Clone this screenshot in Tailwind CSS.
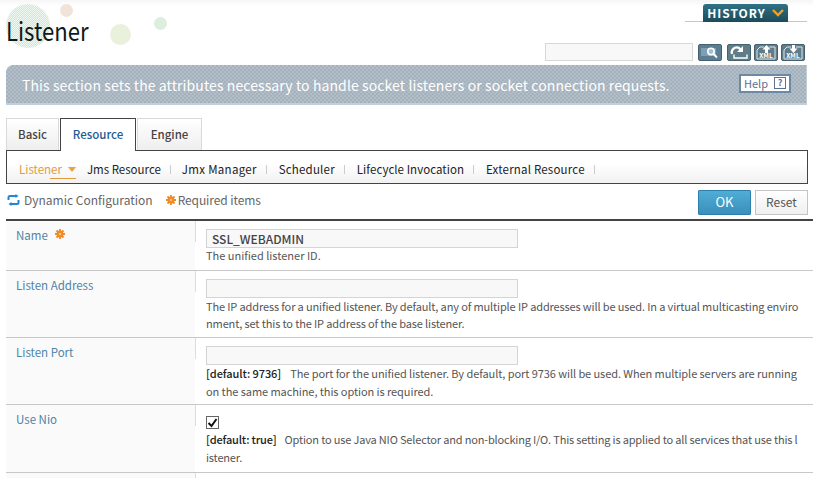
<!DOCTYPE html>
<html lang="en">
<head>
  <meta charset="UTF-8">
  <title>Listener</title>
  <script src="https://cdn.jsdelivr.net/npm/@tailwindcss/browser@4"></script>
</head>
<body class="bg-white font-['Noto_Sans_CJK_KR','Noto_Sans',sans-serif] text-[12px] text-[#555] h-[478px] w-[813px] overflow-hidden">
  <!-- header -->
  <div class="relative h-[65px] bg-gradient-to-b from-[#f6f6f6] to-white to-[6px]">
    <div class="absolute left-[6px] top-[4px] w-[44px] h-[44px] rounded-full bg-[repeating-conic-gradient(#cde8d6_0_25%,#eef8f1_0_50%)] bg-[length:2px_2px]"></div>
    <div class="absolute left-[60px] top-[4px] w-[13px] h-[13px] rounded-full bg-[#f0e3da]"></div>
    <div class="absolute left-[110px] top-[24px] w-[21px] h-[21px] rounded-full bg-[#e9f1dc]"></div>
    <div class="absolute left-[154px] top-[17px] w-[13px] h-[13px] rounded-full bg-[#dceedd]"></div>
    <h1 class="absolute left-[6px] top-[11px] text-[26px] leading-[38px] text-[#0c1a1c] origin-left scale-x-[.85]">Listener</h1>

    <div class="absolute left-[685px] top-[4px] w-[122px] pl-[18px] border-b border-[#b5cdd3] h-[18px]">
      <div class="w-[85px] h-[18px] bg-gradient-to-b from-[#2f7286] to-[#1d4a5a] rounded-t-[3px] flex items-center justify-center gap-[6px] text-white font-bold text-[12px] leading-none tracking-[1px]">
        <span>HISTORY</span>
        <svg width="12" height="8" viewBox="0 0 12 8"><path d="M1 1l5 5 5-5" fill="none" stroke="#f5a01f" stroke-width="2.400"/></svg>
      </div>
    </div>

    <div class="absolute left-[545px] top-[43px] flex items-center">
      <input type="text" class="w-[148px] h-[18px] bg-[#f8f8f8] border border-[#d8d8d8]">
      <div class="ml-[5px] w-[24px] h-[17px] bg-[#5b7d93] border border-[#44616f] rounded-[2px] flex items-center justify-center">
        <svg width="20" height="13" viewBox="0 0 20 13"><rect x="1" y="2" width="15" height="8" fill="#7fa0b4"/><circle cx="11" cy="5.500" r="3.200" fill="#9fc0d4" stroke="#fff" stroke-width="1.600"/><path d="M13.500 8l3.500 3.500" stroke="#fff" stroke-width="2"/></svg>
      </div>
      <div class="ml-[5px] w-[24px] h-[17px] bg-[#5f7c88] border border-[#44616f] rounded-[2px] flex items-center justify-center">
        <svg width="20" height="15" viewBox="0 0 20 15"><path d="M3 9a5 5 0 0 1 7-6l2 2" fill="none" stroke="#fff" stroke-width="2.200"/><path d="M14 1v6H8z" fill="#fff"/><path d="M5 9.500v3.500h13V9.500" fill="none" stroke="#fff" stroke-width="1.400"/></svg>
      </div>
      <div class="ml-[3px] w-[24px] h-[17px] bg-[#5f7c88] border border-[#44616f] rounded-[2px] flex items-center justify-center">
        <svg width="22" height="15" viewBox="0 0 22 15"><path d="M2 14V5l3-3h4M14 2h6v12H2" fill="none" stroke="#dfe7ea" stroke-width="1"/><path d="M11.500 0l4 4.500H13V8h-3V4.500H7.500z" fill="#fff"/><text x="11" y="13" text-anchor="middle" font-size="6.500" font-weight="700" fill="#fff">XML</text></svg>
      </div>
      <div class="ml-[3px] w-[24px] h-[17px] bg-[#5f7c88] border border-[#44616f] rounded-[2px] flex items-center justify-center">
        <svg width="22" height="15" viewBox="0 0 22 15"><path d="M2 14V5l3-3h4M14 2h6v12H2" fill="none" stroke="#dfe7ea" stroke-width="1"/><path d="M11.500 8l4-4.500H13V0h-3v3.500H7.500z" fill="#fff"/><text x="11" y="13" text-anchor="middle" font-size="6.500" font-weight="700" fill="#fff">XML</text></svg>
      </div>
    </div>
  </div>

  <!-- section banner -->
  <div class="mx-[6px] w-[801px] h-[40px] rounded-tl-[8px] border-b-2 border-r border-[#c4ced6] bg-[#aab7c2] bg-[repeating-conic-gradient(#a5b2bd_0_25%,#b1bdc7_0_50%)] bg-[length:4px_4px] flex items-center justify-between pl-[16px] pr-[15px]">
    <span class="text-white text-[14px] tracking-[0.1px] pt-[3px]">This section sets the attributes necessary to handle socket listeners or socket connection requests.</span>
    <span class="w-[52px] h-[19px] mb-[2px] bg-white border-2 border-[#6c8aa6] flex items-center justify-center gap-[6px] text-[11px] text-[#5c7390]">Help <span class="w-[12px] h-[12px] border border-[#5c7390] flex items-center justify-center text-[9px] font-bold">?</span></span>
  </div>

  <!-- tabs -->
  <div class="flex items-end mt-[13px] pl-[6px] h-[32px] gap-[1px] font-medium text-[11.500px]">
    <div class="w-[53px] h-[32px] border border-b-0 border-[#d9d9d9] bg-gradient-to-b from-white to-[#eeeeee] flex items-center justify-center text-[#444]">Basic</div>
    <div class="w-[76px] h-[33px] mb-[-1px] z-10 border border-b-0 border-[#444] bg-white flex items-center justify-center text-[#1f5a94]">Resource</div>
    <div class="w-[65px] h-[32px] border border-b-0 border-[#d9d9d9] bg-gradient-to-b from-white to-[#eeeeee] flex items-center justify-center text-[#444]">Engine</div>
  </div>
  <div class="mx-[6px] w-[802px] h-[34px] border border-[#444] bg-gradient-to-b from-white from-40% to-[#f1f1f1] flex items-center pl-[12px] pt-[5px] text-[#222] text-[11.500px]">
    <span class="relative flex items-center gap-[6px] text-[#e39a3c]">Listener
      <svg width="8" height="5" viewBox="0 0 8 5"><path d="M0 0h8L4 5z" fill="#e8a33c"/></svg>
      <span class="absolute left-[31px] right-0 top-[17px] h-px bg-[#e39a3c]"></span>
    </span>
    <span class="ml-[11px]">Jms Resource</span><span class="w-px h-[9px] bg-[#ccc] mx-[9px]"></span>
    <span class="ml-[2px] tracking-[0.3px]">Jmx Manager</span><span class="w-px h-[9px] bg-[#ccc] mx-[9px]"></span>
    <span class="ml-[3px] tracking-[0.2px]">Scheduler</span><span class="w-px h-[9px] bg-[#ccc] mx-[9px]"></span>
    <span class="ml-[3px] tracking-[0.05px]">Lifecycle Invocation</span><span class="w-px h-[9px] bg-[#ccc] mx-[9px]"></span>
    <span class="ml-[3px] tracking-[0.2px]">External Resource</span><span class="w-px h-[9px] bg-[#ccc] mx-[9px]"></span>
  </div>

  <!-- toolbar -->
  <div class="mx-[6px] w-[802px] h-[35px] flex items-center justify-between text-[#666]">
    <div class="flex items-center mb-[3px]">
      <svg width="13" height="12" viewBox="0 0 13 12" class="ml-[1px]"><path d="M1.500 6V3.500a1.500 1.500 0 0 1 1.500-1.500h6M11.500 6v2.500a1.500 1.500 0 0 1-1.500 1.500H4" fill="none" stroke="#1f86dc" stroke-width="2"/><path d="M8.500 0l3 2-3 2zM4.500 8l-3 2 3 2z" fill="#1f86dc"/></svg>
      <span class="ml-[4px]">Dynamic Configuration</span>
      <svg width="10" height="10" viewBox="0 0 10 10" class="ml-[13px]"><path d="M5 0v10M0 5h10M1.500 1.500l7 7M8.500 1.500l-7 7" stroke="#ef8a24" stroke-width="1.800"/><circle cx="5" cy="5" r="3.400" fill="#ef8a24"/><circle cx="5" cy="5" r="1" fill="#fbd9b0"/></svg>
      <span class="ml-[2px] tracking-[-0.1px]">Required items</span>
    </div>
    <div class="flex items-center gap-[4px] mt-[1px]">
      <button class="w-[53px] h-[25px] bg-gradient-to-b from-[#4fadd6] to-[#3b8fbb] border border-[#2d80ac] rounded-[1px] text-white text-[13px]">OK</button>
      <button class="w-[53px] h-[25px] bg-gradient-to-b from-white to-[#efefef] border border-[#c4c4c4] text-[#555]">Reset</button>
    </div>
  </div>

  <!-- form rows -->
  <div class="mx-[6px] w-[807px] border-t-2 border-[#444]">
    <div class="grid grid-cols-[189px_1fr] h-[50px] border-b border-[#c8c8c8]">
      <div class="bg-[#fafafa] pl-[10px] pt-[6px] text-[#4f84a6] text-[11.500px] flex items-start gap-[7px]">Name
        <svg width="10" height="10" viewBox="0 0 10 10" class="mt-[2px]"><path d="M5 0v10M0 5h10M1.500 1.500l7 7M8.500 1.500l-7 7" stroke="#ef8a24" stroke-width="1.800"/><circle cx="5" cy="5" r="3.400" fill="#ef8a24"/><circle cx="5" cy="5" r="1" fill="#fbd9b0"/></svg>
      </div>
      <div class="relative pl-[11px] pt-[8px]">
        <span class="absolute left-0 top-0 w-px h-[21px] bg-[#ddd]"></span>
        <input type="text" value="SSL_WEBADMIN" class="block w-[312px] h-[19px] px-[5px] bg-[#f8f8f8] border border-[#d4d4d4] text-[#444] font-medium">
        <p class="leading-[17px] mt-[-1px] text-[11px]">The unified listener ID.</p>
      </div>
    </div>
    <div class="grid grid-cols-[189px_1fr] h-[67px] border-b border-[#c8c8c8]">
      <div class="bg-[#fafafa] pl-[10px] pt-[6px] text-[#4f84a6] text-[11.500px]">Listen Address</div>
      <div class="relative pl-[11px] pt-[8px]">
        <span class="absolute left-0 top-0 w-px h-[21px] bg-[#ddd]"></span>
        <input type="text" class="block w-[312px] h-[19px] bg-[#f8f8f8] border border-[#d4d4d4]">
        <p class="leading-[17px] whitespace-nowrap text-[11px] tracking-[-0.135px]">The IP address for a unified listener. By default, any of multiple IP addresses will be used. In a virtual multicasting enviro<br>nment, set this to the IP address of the base listener.</p>
      </div>
    </div>
    <div class="grid grid-cols-[189px_1fr] h-[67px] border-b border-[#c8c8c8]">
      <div class="bg-[#fafafa] pl-[10px] pt-[6px] text-[#4f84a6] text-[11.500px]">Listen Port</div>
      <div class="relative pl-[11px] pt-[8px]">
        <span class="absolute left-0 top-0 w-px h-[21px] bg-[#ddd]"></span>
        <input type="text" class="block w-[312px] h-[19px] bg-[#f8f8f8] border border-[#d4d4d4]">
        <p class="leading-[18px] mt-[-1px] whitespace-nowrap text-[11px] tracking-[-0.075px]"><span class="text-[#222] font-medium mr-[9px]">[default: 9736]</span>The port for the unified listener. By default, port 9736 will be used. When multiple servers are running<br>on the same machine, this option is required.</p>
      </div>
    </div>
    <div class="grid grid-cols-[189px_1fr] h-[68px] border-b border-[#c8c8c8]">
      <div class="bg-[#fafafa] pl-[10px] pt-[6px] text-[#4f84a6] text-[11.500px]">Use Nio</div>
      <div class="relative pl-[11px] pt-[11px]">
        <span class="absolute left-0 top-0 w-px h-[21px] bg-[#ddd]"></span>
        <div class="w-[13px] h-[13px] border border-[#666] bg-white flex items-center justify-center">
          <svg width="11" height="10" viewBox="0 0 11 10"><path d="M1.500 5l3 3 5-7" fill="none" stroke="#111" stroke-width="2"/></svg>
        </div>
        <p class="leading-[18px] mt-[1px] whitespace-nowrap text-[11px] tracking-[-0.17px]"><span class="text-[#222] font-medium mr-[8px]">[default: true]</span>Option to use Java NIO Selector and non-blocking I/O. This setting is applied to all services that use this l<br>istener.</p>
      </div>
    </div>
    <div class="grid grid-cols-[189px_1fr] h-[8px]">
      <div class="bg-[#fafafa]"></div>
      <div class="relative"><span class="absolute left-0 top-0 w-px h-[8px] bg-[#ddd]"></span></div>
    </div>
  </div>
</body>
</html>
